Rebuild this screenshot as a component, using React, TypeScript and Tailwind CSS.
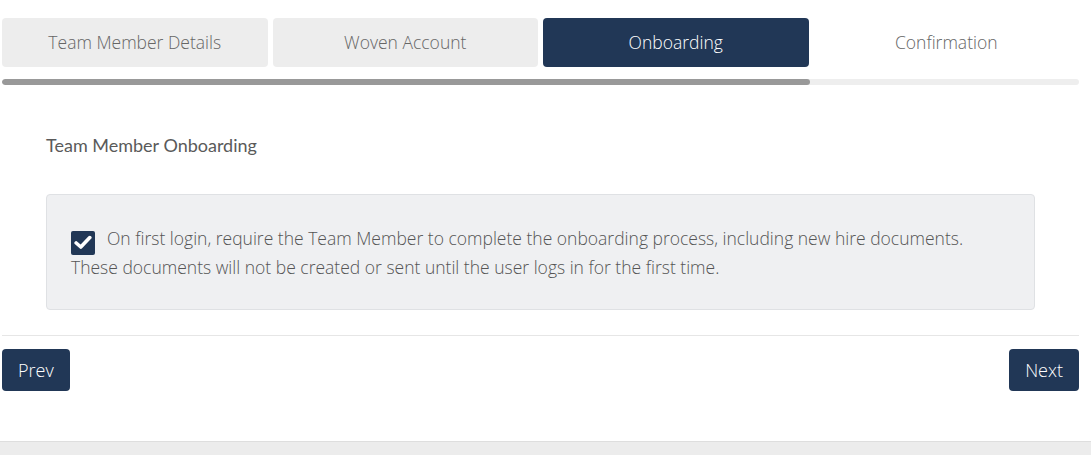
import React from "react";

export default function App() {
  const tabs = [
    { label: "Team Member Details", state: "done" },
    { label: "Woven Account", state: "done" },
    { label: "Onboarding", state: "active" },
    { label: "Confirmation", state: "todo" },
  ];
  return (
    <div className="w-[1091px] h-[455px] bg-white overflow-hidden flex flex-col" style={{ fontFamily: '"Open Sans", sans-serif' }}>
      <div className="ml-[2px] w-[1077px] pt-[18px] flex flex-col">
        <div className="grid grid-cols-4 gap-[5px]">
          {tabs.map((t) => (
            <div
              key={t.label}
              className={
                "h-[49px] rounded-[4px] flex items-center justify-center text-[17.5px] font-light " +
                (t.state === "active"
                  ? "bg-[#213756] text-white"
                  : t.state === "done"
                  ? "bg-[#ededed] text-[#666]"
                  : "bg-white text-[#666]")
              }
            >
              {t.label}
            </div>
          ))}
        </div>
        <div className="mt-[12px] h-[6px] rounded-full bg-[#eeeeee] overflow-hidden">
          <div className="h-full w-[808px] rounded-full bg-[#999999]" />
        </div>
        <div className="mt-[48px] pl-[44px] text-[18px] font-normal text-[#5a5a5a] leading-[24px]" style={{ fontFamily: 'Lato, sans-serif' }}>
          Team Member Onboarding
        </div>
        <div className="mt-[37px] mx-[44px] h-[116px] rounded-[4px] border border-[#dfe1e4] bg-[#eff0f2] px-[24px] pt-[31px] text-[17.5px] font-light leading-[24px] text-[#555]">
          <div>
            <span className="inline-flex align-[-5px] mr-[12px] w-[24px] h-[24px] rounded-[2px] bg-[#213756] items-center justify-center">
              <svg width="18" height="15" viewBox="0 0 18 15">
                <path d="M2.2 8 L6.8 12 L15.8 2.6" fill="none" stroke="white" strokeWidth="3.6" strokeLinecap="round" strokeLinejoin="round" />
              </svg>
            </span>
            On first login, require the Team Member to complete the onboarding process, including new hire documents.
            <br />
            These documents will not be created or sent until the user logs in for the first time.
          </div>
        </div>
        <div className="mt-[25px] h-px bg-[#e6e6e6]" />
        <div className="mt-[13px] flex justify-between">
          <button className="h-[42px] px-[16px] rounded-[4px] bg-[#213756] text-white text-[18px] font-light">Prev</button>
          <button className="h-[42px] px-[16px] rounded-[4px] bg-[#213756] text-white text-[18px] font-light">Next</button>
        </div>
      </div>
      <div className="mt-[50px] flex-1 bg-[#ececec] border-t border-[#dedede]" />
    </div>
  );
}
